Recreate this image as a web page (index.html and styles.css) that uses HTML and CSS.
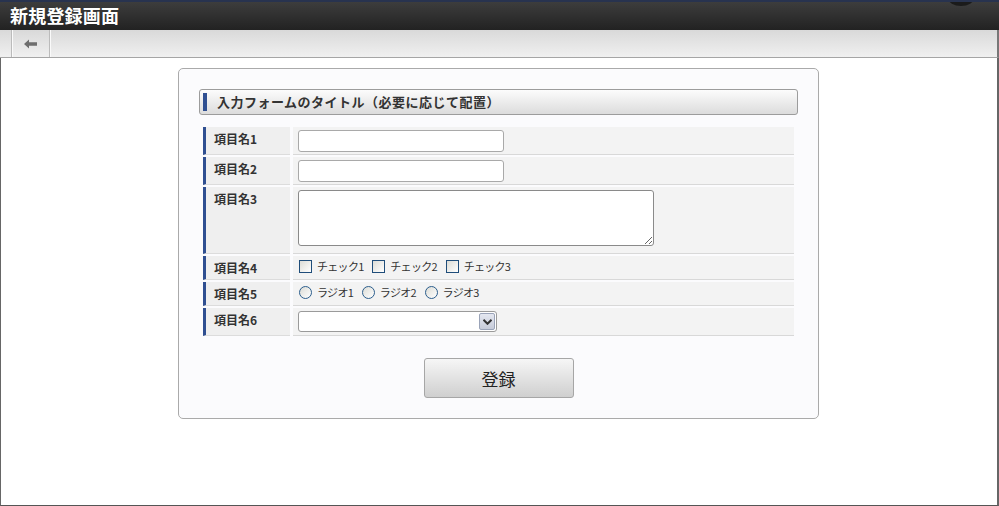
FILE: index.html
```html
<!DOCTYPE html>
<html lang="ja">
  <head>
    <meta charset="utf-8">
    <link rel="stylesheet" href="styles.css">
    <title>新規登録画面</title>
  </head>
  <body>
    <div class="header">
      <h1 class="header__title">新規登録画面</h1>
      <span class="header__logo"></span>
    </div>
    <div class="toolbar">
      <span class="toolbar__sep"></span>
      <a class="toolbar__back" href="#" title="戻る">
        <svg width="14" height="10" viewBox="0 0 14 10">
          <path d="M0 5 L5 0.5 L5 3.3 L13 3.3 L13 6.7 L5 6.7 L5 9.5 Z" fill="#6e6e6e"/>
        </svg>
      </a>
      <span class="toolbar__sep"></span>
    </div>

    <div class="content">
      <form class="panel">
        <h2 class="panel__title">入力フォームのタイトル（必要に応じて配置）</h2>

        <table class="form-table">
          <tr>
            <th>項目名1</th>
            <td><input type="text" class="text-input"></td>
          </tr>
          <tr>
            <th>項目名2</th>
            <td><input type="text" class="text-input"></td>
          </tr>
          <tr>
            <th>項目名3</th>
            <td><textarea class="text-area"></textarea></td>
          </tr>
          <tr class="row-small">
            <th>項目名4</th>
            <td>
              <label class="choice"><input type="checkbox" class="check">チェック1</label>
              <label class="choice"><input type="checkbox" class="check">チェック2</label>
              <label class="choice"><input type="checkbox" class="check">チェック3</label>
            </td>
          </tr>
          <tr class="row-small">
            <th>項目名5</th>
            <td>
              <label class="choice"><input type="radio" name="item5" class="radio">ラジオ1</label>
              <label class="choice"><input type="radio" name="item5" class="radio">ラジオ2</label>
              <label class="choice"><input type="radio" name="item5" class="radio">ラジオ3</label>
            </td>
          </tr>
          <tr>
            <th>項目名6</th>
            <td>
              <span class="select-wrap">
                <select class="select"><option></option></select>
                <span class="select-wrap__btn">
                  <svg width="9" height="6" viewBox="0 0 9 6">
                    <path d="M0.5 0.8 L4.5 4.8 L8.5 0.8" fill="none" stroke="#333" stroke-width="2"/>
                  </svg>
                </span>
              </span>
            </td>
          </tr>
        </table>

        <div class="panel__actions">
          <button type="button" class="btn">登録</button>
        </div>
      </form>
    </div>
  </body>
</html>
```

FILE: styles.css
```css
* { box-sizing: border-box; }

body {
  margin: 0;
  font-family: "Noto Sans CJK JP", "Liberation Sans", sans-serif;
  color: #333;
  background: #fff;
}

/* header */
.header {
  position: relative;
  height: 30px;
  border-top: 2px solid #28334f;
  background: linear-gradient(#3d3d3d, #222);
  overflow: hidden;
}
.header__title {
  margin: 0;
  padding-left: 10px;
  font-size: 18px;
  line-height: 27px;
  font-weight: bold;
  letter-spacing: 0.2px;
  color: #fff;
}
.header__logo {
  position: absolute;
  top: -12px;
  right: 25px;
  width: 26px;
  height: 16px;
  border-radius: 50%;
  background: #1b1b1b;
}

/* toolbar */
.toolbar {
  display: flex;
  height: 28px;
  background: linear-gradient(#d9d9d9, #f0f0f0);
  border-bottom: 1px solid #a5a5a5;
  border-right: 2px solid #777;
}
.toolbar__sep {
  width: 2px;
  margin-left: 11px;
  border-left: 1px solid #bbb;
  border-right: 1px solid #fafafa;
}
.toolbar__back {
  display: flex;
  align-items: center;
  justify-content: center;
  width: 36px;
}
.toolbar__back + .toolbar__sep { margin-left: 0; }

/* content frame */
.content {
  height: 448px;
  padding: 10px 1px 0 0;
  border-left: 1px solid #666;
  border-right: 2px solid #666;
  border-bottom: 1px solid #555;
}

.panel {
  width: 641px;
  margin: 0 auto;
  padding: 20px;
  border: 1px solid #aaa;
  border-radius: 5px;
  background: #fbfbfd;
}

.panel__title {
  margin: 0;
  height: 26px;
  padding-left: 17px;
  position: relative;
  font-size: 13px;
  line-height: 24px;
  font-weight: bold;
  letter-spacing: 0.5px;
  color: #333;
  border: 1px solid #9c9c9c;
  border-radius: 3px;
  background: linear-gradient(#fcfcfc, #dcdcdc);
}
.panel__title::before {
  content: "";
  position: absolute;
  left: 3px;
  top: 3px;
  width: 4px;
  height: 18px;
  background: #2f4f91;
}

/* form table */
.form-table {
  width: 597px;
  margin: 10px 0 0 1px;
  border-collapse: separate;
  border-spacing: 3px 2px;
  font-size: 12px;
}
.form-table th {
  width: 87px;
  padding: 4px 0 0 8px;
  line-height: 16px;
  vertical-align: top;
  text-align: left;
  font-weight: bold;
  color: #333;
  background: #efefef;
  border-left: 3px solid #2f4f91;
  border-bottom: 1px solid #dcdcdc;
}
.form-table td {
  height: 28px;
  padding: 3px 5px 2px 5px;
  vertical-align: top;
  background: #f3f3f3;
  border-bottom: 1px solid #d8d8d8;
}
.form-table .row-small td {
  height: 24px;
  padding-top: 3px;
  padding-bottom: 1px;
}

.text-input {
  display: block;
  width: 206px;
  height: 22px;
  margin: 0;
  border: 1px solid #a9a9a9;
  border-radius: 3px;
  background: #fff;
}
.text-area {
  display: block;
  width: 356px;
  height: 56px;
  margin: 0 0 5px 0;
  border: 1px solid #8a8a8a;
  border-radius: 3px;
  background: #fff;
}

.choice {
  display: inline-flex;
  align-items: center;
  margin-right: 5px;
  font-size: 11px;
  line-height: 15px;
  letter-spacing: -0.7px;
  color: #333;
}
.check {
  appearance: none;
  width: 13px;
  height: 13px;
  margin: 0 5px 0 1px;
  border: 1px solid #1f4d7a;
  background: linear-gradient(135deg, #dcdcd6, #fff);
}
.radio {
  appearance: none;
  width: 13px;
  height: 13px;
  margin: 0 5px 0 1px;
  border: 1px solid #2b5d8c;
  border-radius: 50%;
  background: linear-gradient(135deg, #dcdcd6, #fff);
}

.select-wrap {
  position: relative;
  display: inline-block;
}
.select {
  display: block;
  appearance: none;
  width: 199px;
  height: 21px;
  margin: 0;
  border: 1px solid #9a9a9a;
  border-radius: 3px;
  background: #fff;
}
.select-wrap__btn {
  position: absolute;
  top: 2px;
  right: 2px;
  display: flex;
  align-items: center;
  justify-content: center;
  width: 16px;
  height: 17px;
  border: 1px solid #9aa3b8;
  border-radius: 2px;
  background: linear-gradient(#e4e7f0, #c6cbd9);
}

.panel__actions {
  display: flex;
  justify-content: center;
  padding-top: 20px;
}
.btn {
  width: 150px;
  height: 40px;
  font-family: inherit;
  font-size: 17px;
  color: #222;
  border: 1px solid #a6a6a6;
  border-radius: 3px;
  background: linear-gradient(#f6f6f6, #cfcfcf);
}
```
